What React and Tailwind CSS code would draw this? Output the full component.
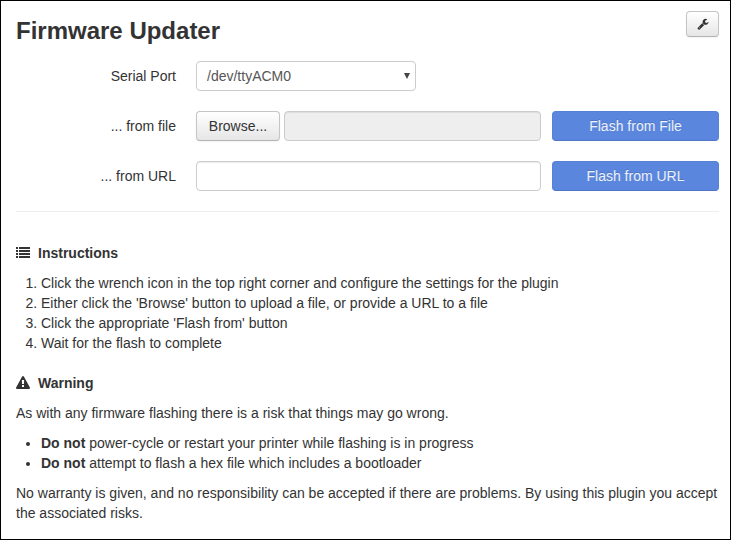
import React from "react";

const buttonLook =
  "rounded border border-[#c5c5c5] border-b-[#b3b3b3] bg-[#f5f5f5] bg-linear-to-b from-white to-[#e6e6e6] shadow-[inset_0_1px_0_rgba(255,255,255,0.2),0_1px_2px_rgba(0,0,0,0.05)]";
const fieldLook =
  "h-[30px] min-w-0 flex-1 rounded border border-[#cccccc] px-2 text-[#555555] shadow-[inset_0_1px_1px_rgba(0,0,0,0.075)]";

function WrenchIcon() {
  return (
    <svg viewBox="0 0 1792 1792" className="size-3" fill="currentColor" aria-hidden="true">
      <path d="M448 1472q0-26-19-45t-45-19-45 19-19 45 19 45 45 19 45-19 19-45zm644-420l-682 682q-37 37-90 37-52 0-91-37l-106-108q-38-36-38-90 0-53 38-91l681-681q39 98 114.5 173.5t173.5 114.5zm634-435q0 39-23 106-47 134-164.5 217.5t-258.5 83.5q-185 0-316.5-131.5t-131.5-316.5 131.5-316.5 316.5-131.5q58 0 121.5 16.5t107.5 46.5q16 11 16 28t-16 28l-293 169v224l193 107q5-3 79-48.5t135.5-81 70.5-35.5q15 0 23.5 10t8.5 25z" />
    </svg>
  );
}

function ListIcon() {
  return (
    <svg viewBox="0 0 14 14" className="size-3.5" fill="currentColor" aria-hidden="true">
      <path d="M0 1h2v2H0zM3 1h11v2H3zM0 4h2v2H0zM3 4h11v2H3zM0 7h2v2H0zM3 7h11v2H3zM0 10h2v2H0zM3 10h11v2H3z" />
    </svg>
  );
}

function WarningIcon() {
  return (
    <svg viewBox="0 0 1792 1792" className="size-3.5" fill="currentColor" aria-hidden="true">
      <path d="M1024 1375v-190q0-14-9.5-23.5t-22.5-9.5h-192q-13 0-22.5 9.5t-9.5 23.5v190q0 14 9.5 23.5t22.5 9.5h192q13 0 22.5-9.5t9.5-23.5zm-2-374l18-459q0-12-10-19-13-11-24-11h-220q-11 0-24 11-10 7-10 21l17 457q0 10 10 16.5t24 6.5h185q14 0 23.5-6.5t10.5-16.5zm-14-934l768 1408q35 63-2 126-17 29-46.5 46t-63.5 17h-1536q-34 0-63.5-17t-46.5-46q-37-63-2-126l768-1408q17-31 47-49t65-18 65 18 47 49z" />
    </svg>
  );
}

function Row({ label, htmlFor, children }) {
  return (
    <div className="flex items-center gap-5">
      <label htmlFor={htmlFor} className="w-40 shrink-0 text-right">
        {label}
      </label>
      <div className="flex min-w-0 flex-1 items-center gap-[11px]">{children}</div>
    </div>
  );
}

function FlashButton({ children }) {
  return (
    <button
      type="button"
      className="h-[30px] w-[167px] shrink-0 rounded border border-[#5681d8] border-b-[#4f76c6] bg-[#5a86de] text-white/90 [text-shadow:0_-1px_0_rgba(0,0,0,0.15)]"
    >
      {children}
    </button>
  );
}

function SectionTitle({ icon, children }) {
  return (
    <h2 className="flex items-center gap-2 font-bold">
      {icon}
      {children}
    </h2>
  );
}

export default function App() {
  return (
    <main className="min-h-screen border border-black bg-white pt-2.5 pr-[11px] pb-4 pl-[15px] font-['Liberation_Sans',Arial,sans-serif] text-sm leading-5 text-[#333333]">
      <header className="flex items-start justify-between">
        <h1 className="text-2xl leading-10 font-bold">Firmware Updater</h1>
        <button
          type="button"
          aria-label="Plugin settings"
          className={`flex h-[26px] w-[33px] items-center justify-center ${buttonLook}`}
        >
          <WrenchIcon />
        </button>
      </header>

      <form className="mt-2.5 flex flex-col gap-5">
        <Row label="Serial Port" htmlFor="port">
          <div className="relative w-[220px]">
            <select
              id="port"
              className="h-[30px] w-full appearance-none rounded border border-[#cccccc] bg-white px-2.5 text-[#555555]"
            >
              <option>/dev/ttyACM0</option>
            </select>
            <svg
              viewBox="0 0 6 6"
              className="pointer-events-none absolute top-3 right-1.5 size-1.5 text-[#444444]"
              fill="currentColor"
              aria-hidden="true"
            >
              <path d="M0 0h6L3 6z" />
            </svg>
          </div>
        </Row>
        <Row label="... from file" htmlFor="file">
          <div className="flex min-w-0 flex-1 gap-1">
            <button type="button" className={`h-[30px] w-[84px] shrink-0 ${buttonLook}`}>
              Browse...
            </button>
            <input id="file" type="text" readOnly className={`${fieldLook} bg-[#eeeeee]`} />
          </div>
          <FlashButton>Flash from File</FlashButton>
        </Row>
        <Row label="... from URL" htmlFor="url">
          <input id="url" type="text" className={`${fieldLook} bg-white`} />
          <FlashButton>Flash from URL</FlashButton>
        </Row>
      </form>

      <hr className="mt-5 mb-[31px] border-[#eeeeee]" />

      <section className="mb-5 flex flex-col gap-2.5">
        <SectionTitle icon={<ListIcon />}>Instructions</SectionTitle>
        <ol className="list-decimal pl-[25px]">
          <li>Click the wrench icon in the top right corner and configure the settings for the plugin</li>
          <li>Either click the 'Browse' button to upload a file, or provide a URL to a file</li>
          <li>Click the appropriate 'Flash from' button</li>
          <li>Wait for the flash to complete</li>
        </ol>
      </section>

      <section className="flex flex-col gap-2.5">
        <SectionTitle icon={<WarningIcon />}>Warning</SectionTitle>
        <p>As with any firmware flashing there is a risk that things may go wrong.</p>
        <ul className="list-disc pl-[25px]">
          <li>
            <strong>Do not</strong> power-cycle or restart your printer while flashing is in progress
          </li>
          <li>
            <strong>Do not</strong> attempt to flash a hex file which includes a bootloader
          </li>
        </ul>
        <p>
          No warranty is given, and no responsibility can be accepted if there are problems. By using this
          plugin you accept the associated risks.
        </p>
      </section>
    </main>
  );
}
